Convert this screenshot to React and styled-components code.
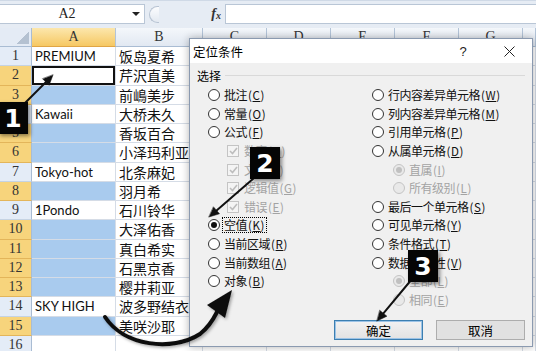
import React from 'react';
import styled, { createGlobalStyle } from 'styled-components';

const GlobalStyle = createGlobalStyle`
  html, body { margin: 0; padding: 0; background: #fff; }
`;

const CJK = '"Noto Sans CJK SC", "Noto Sans", sans-serif';
const SERIF = '"Liberation Serif", "DejaVu Serif", "Noto Sans CJK SC", serif';

const Window = styled.div`
  position: relative;
  width: 536px;
  height: 351px;
  overflow: hidden;
  background: #fff;
  font-family: ${CJK};
`;

/* ---------- formula bar ---------- */

const FormulaBar = styled.div`
  display: flex;
  height: 28px;
  box-sizing: border-box;
  padding: 3px 0 4px;
  background: #e6ecf4;
  border-top: 1px solid #cfd9e6;
`;

const NameBox = styled.div`
  width: 145px;
  display: flex;
  align-items: center;
  box-sizing: border-box;
  background: #fff;
  border: 1px solid #b9c6d6;
  border-left: none;
  font: 14px ${SERIF};
  color: #222;
`;

const NameText = styled.span`
  flex: 1;
  text-align: center;
  padding-left: 2px;
`;

const DropArrow = styled.span`
  width: 0;
  height: 0;
  margin-right: 4px;
  border-left: 4px solid transparent;
  border-right: 4px solid transparent;
  border-top: 4px solid #222;
`;

const Grip = styled.div`
  width: 80px;
  display: flex;
  align-items: center;
  justify-content: space-between;
  padding: 0 4px;
  box-sizing: border-box;
`;

const GripCap = styled.span`
  width: 10px;
  height: 17px;
  box-sizing: border-box;
  border: 1px solid #b8c4d3;
  border-right: none;
  border-radius: 9px 0 0 9px;
  background: linear-gradient(#fbfcfe, #e3e9f1);
`;

const Fx = styled.span`
  font: italic bold 14px ${SERIF};
  color: #333;
  sub { font-size: 10px; vertical-align: -1px; }
`;

const FormulaInput = styled.div`
  flex: 1;
  background: #fff;
  border: 1px solid #b9c6d6;
  border-right: none;
`;

/* ---------- sheet grid ---------- */

const Sheet = styled.div`
  display: grid;
  grid-template-columns: 32px 84px 87px repeat(5, 64px) 13px;
  grid-template-rows: 19px;
  grid-auto-rows: 19.25px;
`;

const Corner = styled.div`
  position: relative;
  background: #e4ebf5;
  border-right: 1px solid #a9bcd3;
  border-bottom: 1px solid #a9bcd3;
  &::after {
    content: '';
    position: absolute;
    right: 2px;
    bottom: 2px;
    width: 13px;
    height: 12px;
    background: linear-gradient(to top left, #b4c1d1 50%, transparent 50%);
  }
`;

const ColHeader = styled.div`
  display: flex;
  align-items: center;
  justify-content: center;
  box-sizing: border-box;
  border-right: 1px solid #b3c4d8;
  border-bottom: 1px solid ${p => (p.$active ? '#e0a545' : '#a9bcd3')};
  background: ${p =>
    p.$active ? 'linear-gradient(#fce7ad, #f6c863)' : 'linear-gradient(#f4f7fb, #e1e8f2)'};
  font: 14px ${SERIF};
  color: #333;
`;

const RowHeader = styled.div`
  display: flex;
  align-items: center;
  justify-content: center;
  box-sizing: border-box;
  border-right: 1px solid #a9bcd3;
  border-bottom: 1px solid ${p => (p.$active ? '#e3b55a' : '#c5d3e3')};
  background: ${p => (p.$active ? '#f7d47c' : '#e4ecf7')};
  font: 14px ${SERIF};
  color: #333;
`;

const Cell = styled.div`
  display: flex;
  align-items: center;
  box-sizing: border-box;
  padding-left: 3px;
  white-space: nowrap;
  border-right: 1px solid #d5dce6;
  border-bottom: 1px solid #d5dce6;
  background: ${p => (p.$selected ? '#a9cbee' : '#fff')};
  box-shadow: ${p => (p.$active ? 'inset 0 0 0 2px #111' : 'none')};
  font-family: ${p => (p.$latin ? '"Lato", "Open Sans", sans-serif' : CJK)};
  font-size: ${p => (p.$latin ? '13px' : '14px')};
  color: #111;
  position: relative;
  z-index: ${p => (p.$latin ? 0 : 1)};
`;

/* ---------- dialog ---------- */

const Dialog = styled.div`
  position: absolute;
  left: 189px;
  top: 38px;
  width: 344px;
  height: 309px;
  box-sizing: border-box;
  display: flex;
  flex-direction: column;
  background: #f0f0f0;
  border: 1px solid #8b9ab0;
  box-shadow: 0 0 8px rgba(0, 0, 0, 0.3);
  z-index: 5;
`;

const TitleBar = styled.div`
  height: 24px;
  display: flex;
  align-items: center;
  background: #fff;
  padding-left: 3px;
  font-size: 12.5px;
  color: #000;
`;

const Title = styled.span`
  flex: 1;
`;

const TitleButton = styled.span`
  width: 46px;
  height: 24px;
  display: flex;
  align-items: center;
  justify-content: center;
  font: 13px "Liberation Sans", sans-serif;
  color: #222;
`;

const Body = styled.div`
  flex: 1;
  display: flex;
  flex-direction: column;
  padding: 5px 7px 6px 7px;
`;

const Legend = styled.div`
  height: 14px;
  display: flex;
  align-items: center;
  gap: 4px;
  font-size: 12px;
  color: #000;
  &::after {
    content: '';
    flex: 1;
    height: 1px;
    background: #d9d9d9;
  }
`;

const Options = styled.div`
  display: grid;
  grid-template-columns: 164px 1fr;
  margin-top: 4px;
  padding-left: 11px;
`;

const OptionList = styled.div`
  display: flex;
  flex-direction: column;
`;

const OptionRow = styled.div`
  height: 18.6px;
  display: flex;
  align-items: center;
  padding-left: ${p => p.$indent || 0}px;
  font-size: 12px;
  letter-spacing: -0.5px;
  color: ${p => (p.$disabled ? '#a3a3a3' : '#111')};
  white-space: nowrap;
`;

const Label = styled.span`
  padding: 0 1px;
  border: 1px dotted ${p => (p.$focused ? '#000' : 'transparent')};
  line-height: 13px;
`;

const Key = styled.span`
  letter-spacing: 0.6px;
  margin-left: 1px;
  font-size: 11.5px;
  u { text-underline-offset: 1px; }
`;

const Radio = styled.span`
  position: relative;
  flex: none;
  width: 12px;
  height: 12px;
  margin-right: 2px;
  box-sizing: border-box;
  border-radius: 50%;
  border: 1px solid ${p => (p.$disabled ? '#c4c4c4' : '#333')};
  background: ${p => (p.$disabled ? '#e9e9e9' : '#fff')};
  &::after {
    content: '';
    display: ${p => (p.$checked ? 'block' : 'none')};
    position: absolute;
    inset: 2px;
    border-radius: 50%;
    background: ${p => (p.$disabled ? '#c0c0c0' : '#111')};
  }
`;

const Check = styled.span`
  flex: none;
  width: 12px;
  height: 12px;
  margin-right: 3px;
  box-sizing: border-box;
  border: 1px solid #c4c4c4;
  background: #f4f4f4;
  display: flex;
  align-items: center;
  justify-content: center;
`;

const Buttons = styled.div`
  margin-top: auto;
  display: flex;
  justify-content: flex-end;
  gap: 13px;
`;

const Button = styled.button`
  width: 89px;
  height: 20px;
  padding: 0;
  box-sizing: border-box;
  font: 12.5px ${CJK};
  color: #000;
  border: 1px solid ${p => (p.$primary ? '#3c7fb1' : '#adadad')};
  background: ${p => (p.$primary ? 'linear-gradient(#f2f2f2, #e2e2e2)' : '#e1e1e1')};
  box-shadow: ${p => (p.$primary ? 'inset 0 0 0 1px #9cc3e6' : 'none')};
`;

/* ---------- annotations ---------- */

const Badge = styled.div`
  position: absolute;
  left: ${p => p.$x}px;
  top: ${p => p.$y}px;
  width: 30px;
  height: 32px;
  display: flex;
  align-items: center;
  justify-content: center;
  background: #050505;
  color: #fff;
  font: bold 25px "DejaVu Sans", sans-serif;
  box-shadow: 2px 2px 4px rgba(0, 0, 0, 0.45);
  z-index: 8;
`;

const Overlay = styled.svg`
  position: absolute;
  left: 0;
  top: 0;
  width: 536px;
  height: 351px;
  pointer-events: none;
  z-index: 7;
`;

const rows = [
  { a: 'PREMIUM', b: '饭岛夏希' },
  { active: true, b: '芹沢直美' },
  { sel: true, b: '前嶋美步' },
  { a: 'Kawaii', b: '大桥未久' },
  { sel: true, b: '香坂百合' },
  { sel: true, b: '小泽玛利亚' },
  { a: 'Tokyo-hot', b: '北条麻妃' },
  { sel: true, b: '羽月希' },
  { a: '1Pondo', b: '石川铃华' },
  { sel: true, b: '大泽佑香' },
  { sel: true, b: '真白希实' },
  { sel: true, b: '石黑京香' },
  { sel: true, b: '樱井莉亚' },
  { a: 'SKY HIGH', b: '波多野结衣' },
  { sel: true, b: '美咲沙耶' },
  {},
];

const leftOptions = [
  { text: '批注', key: 'C' },
  { text: '常量', key: 'O' },
  { text: '公式', key: 'F' },
  { text: '数字', key: 'U', check: true },
  { text: '文本', key: 'X', check: true },
  { text: '逻辑值', key: 'G', check: true },
  { text: '错误', key: 'E', check: true },
  { text: '空值', key: 'K', checked: true, focused: true },
  { text: '当前区域', key: 'R' },
  { text: '当前数组', key: 'A' },
  { text: '对象', key: 'B' },
];

const rightOptions = [
  { text: '行内容差异单元格', key: 'W' },
  { text: '列内容差异单元格', key: 'M' },
  { text: '引用单元格', key: 'P' },
  { text: '从属单元格', key: 'D' },
  { text: '直属', key: 'I', sub: true, checked: true },
  { text: '所有级别', key: 'L', sub: true },
  { text: '最后一个单元格', key: 'S' },
  { text: '可见单元格', key: 'Y' },
  { text: '条件格式', key: 'T' },
  { text: '数据有效性', key: 'V' },
  { text: '全部', key: 'L', sub: true, checked: true },
  { text: '相同', key: 'E', sub: true },
];

const Tick = () => (
  <svg width="9" height="8" viewBox="0 0 9 8">
    <path d="M1 4 L3.5 6.5 L8 1" fill="none" stroke="#bdbdbd" strokeWidth="1.6" />
  </svg>
);

const Option = ({ opt }) => {
  const disabled = opt.check || opt.sub;
  return (
    <OptionRow $indent={opt.check ? 19 : opt.sub ? 21 : 0} $disabled={disabled}>
      {opt.check ? (
        <Check>
          <Tick />
        </Check>
      ) : (
        <Radio $checked={opt.checked} $disabled={disabled} />
      )}
      <Label $focused={opt.focused}>
        {opt.text}
        <Key>
          (<u>{opt.key}</u>)
        </Key>
      </Label>
    </OptionRow>
  );
};

const cols = ['C', 'D', 'E', 'F', 'G', ''];

export default function App() {
  return (
    <Window>
      <GlobalStyle />
      <FormulaBar>
        <NameBox>
          <NameText>A2</NameText>
          <DropArrow />
        </NameBox>
        <Grip>
          <GripCap />
          <Fx>
            f<sub>x</sub>
          </Fx>
        </Grip>
        <FormulaInput />
      </FormulaBar>

      <Sheet>
        <Corner />
        <ColHeader $active>A</ColHeader>
        <ColHeader>B</ColHeader>
        {cols.map((c, i) => (
          <ColHeader key={i}>{c}</ColHeader>
        ))}
        {rows.map((r, i) => (
          <React.Fragment key={i}>
            <RowHeader $active={r.sel || r.active}>{i + 1}</RowHeader>
            <Cell $latin $selected={r.sel} $active={r.active}>
              {r.a}
            </Cell>
            <Cell>{r.b}</Cell>
            {cols.map((c, j) => (
              <Cell key={j} />
            ))}
          </React.Fragment>
        ))}
      </Sheet>

      <Dialog>
        <TitleBar>
          <Title>定位条件</Title>
          <TitleButton>?</TitleButton>
          <TitleButton>
            <svg width="11" height="11" viewBox="0 0 11 11">
              <path d="M0.5 0.5 L10.5 10.5 M10.5 0.5 L0.5 10.5" stroke="#222" strokeWidth="1" />
            </svg>
          </TitleButton>
        </TitleBar>
        <Body>
          <Legend>选择</Legend>
          <Options>
            <OptionList>
              {leftOptions.map((o, i) => (
                <Option key={i} opt={o} />
              ))}
            </OptionList>
            <OptionList>
              {rightOptions.map((o, i) => (
                <Option key={i} opt={o} />
              ))}
            </OptionList>
          </Options>
          <Buttons>
            <Button $primary>确定</Button>
            <Button>取消</Button>
          </Buttons>
        </Body>
      </Dialog>

      <Overlay viewBox="0 0 536 351">
        <defs>
          <filter id="soft" x="-20%" y="-20%" width="140%" height="140%">
            <feDropShadow dx="1.5" dy="1.5" stdDeviation="1.5" floodColor="#000" floodOpacity="0.35" />
          </filter>
        </defs>
        <g fill="#111" stroke="#111" strokeLinecap="round">
          <line x1="22" y1="106" x2="46" y2="82" strokeWidth="2" />
          <polygon points="53,75 49.1,85.3 42.7,78.9" strokeWidth="0.5" />
          <line x1="254" y1="178" x2="216.6" y2="210.4" strokeWidth="2" />
          <polygon points="209,217 219.5,213.8 213.6,207" strokeWidth="0.5" />
          <line x1="412" y1="279" x2="383.4" y2="313.3" strokeWidth="2" />
          <polygon points="377,321 386.9,316.2 379.9,310.4" strokeWidth="0.5" />
        </g>
        <g filter="url(#soft)">
          <path
            d="M105 317 C 124 346, 172 352, 200 334 C 209 327, 213 320, 217 312"
            fill="none"
            stroke="#111"
            strokeWidth="4"
            strokeLinecap="round"
          />
          <polygon points="232,290 207,305 225,318" fill="#111" />
        </g>
      </Overlay>

      <Badge $x={-2} $y={102}>1</Badge>
      <Badge $x={250} $y={147}>2</Badge>
      <Badge $x={408} $y={250}>3</Badge>
    </Window>
  );
}
